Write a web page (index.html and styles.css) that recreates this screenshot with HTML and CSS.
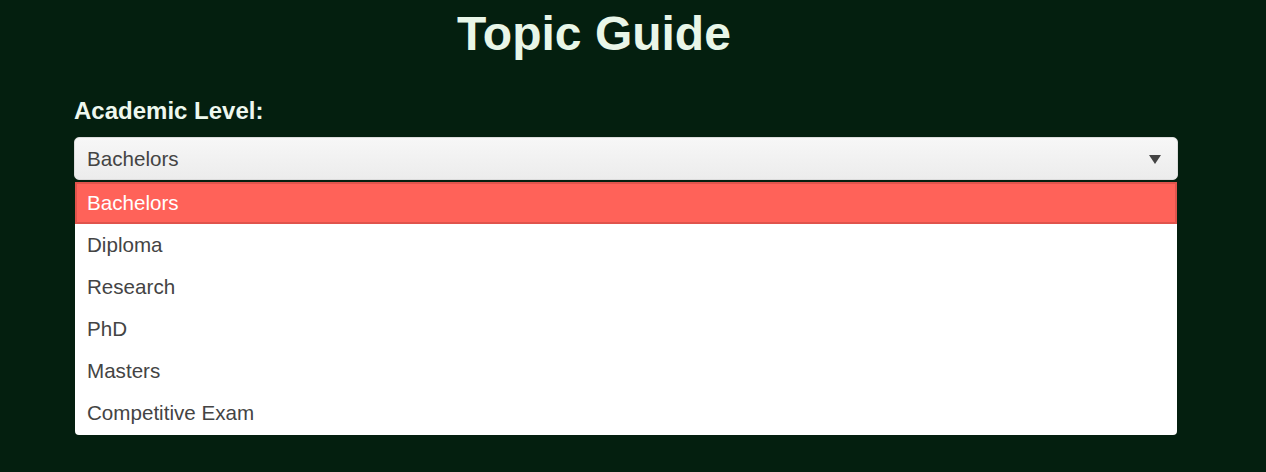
FILE: index.html
```html
<!DOCTYPE html>
<html lang="en">
<head>
<meta charset="utf-8">
<title>Topic Guide</title>
<link rel="stylesheet" href="styles.css">
</head>
<body>
<h1 class="title">Topic Guide</h1>
<main class="form">
  <label class="label">Academic Level:</label>
  <div class="select">
    <span class="select-value">Bachelors</span>
    <span class="arrow"></span>
  </div>
  <ul class="options">
    <li class="option selected">Bachelors</li>
    <li class="option">Diploma</li>
    <li class="option">Research</li>
    <li class="option">PhD</li>
    <li class="option">Masters</li>
    <li class="option">Competitive Exam</li>
  </ul>
</main>
</body>
</html>
```
FILE: styles.css
```css
html, body {
  margin: 0;
  padding: 0;
}
body {
  background: #041f0f;
  font-family: "Liberation Sans", Arial, sans-serif;
  height: 472px;
  overflow: hidden;
}
.title {
  margin: 6px 78px 0 0;
  text-align: center;
  font-size: 48px;
  font-weight: bold;
  line-height: 55px;
  color: #e9f6e8;
}
.form {
  margin: 36px 88px 0 74px;
  display: flex;
  flex-direction: column;
}
.label {
  font-size: 24px;
  font-weight: bold;
  line-height: 28px;
  color: #eef8ee;
}
.select {
  margin-top: 12px;
  height: 43px;
  box-sizing: border-box;
  border: 1px solid #dcdcdc;
  border-radius: 5px;
  background: linear-gradient(#f7f7f7, #ececec);
  padding: 10px 16px 0 12px;
  display: flex;
  justify-content: space-between;
  align-items: flex-start;
}
.select-value {
  font-size: 20.6px;
  line-height: 22px;
  color: #444;
}
.arrow {
  margin-top: 7px;
  width: 0;
  height: 0;
  border-left: 6px solid transparent;
  border-right: 6px solid transparent;
  border-top: 9px solid #444;
}
.options {
  list-style: none;
  margin: 2px 1px 0 1px;
  padding: 0 0 1px 0;
  background: #fff;
  border-radius: 0 0 4px 4px;
}
.option {
  height: 42px;
  box-sizing: border-box;
  padding: 10px 12px 10px 12px;
  font-size: 20.6px;
  line-height: 22px;
  color: #444;
}
.option.selected {
  background: #ff6259;
  color: #fff;
  box-shadow: inset 0 0 0 2px #e0544c;
}
```
